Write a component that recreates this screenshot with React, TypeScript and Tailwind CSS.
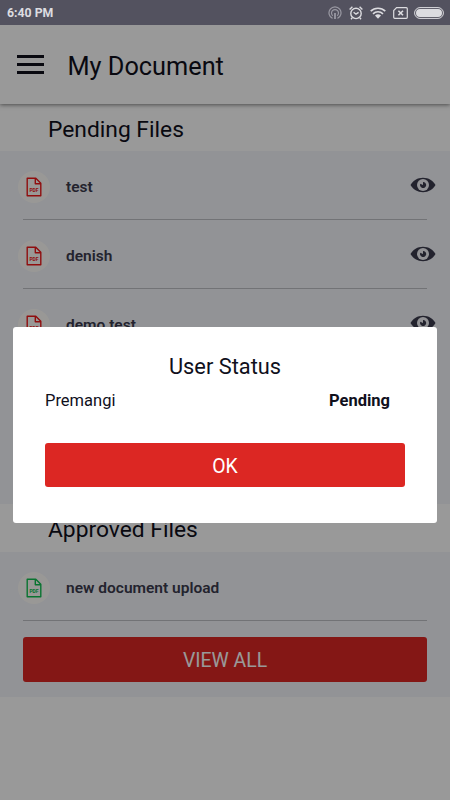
import React, { ReactNode } from 'react';

interface FileItem {
  name: string;
  approved?: boolean;
}

const pendingFiles: FileItem[] = [{ name: 'test' }, { name: 'denish' }, { name: 'demo test' }];
const approvedFiles: FileItem[] = [{ name: 'new document upload', approved: true }];

const StatusBar: React.FC = () => (
  <div className="relative z-20 flex h-[25px] shrink-0 items-center justify-between bg-[#53525f] pl-[7px] pr-[6px] text-[#dcdce0]">
    <span className="mt-px text-[12.3px] font-bold leading-none">6:40 PM</span>
    <div className="flex items-center">
      <svg className="mr-[7px]" width="14" height="14" viewBox="0 0 14 14" fill="none" stroke="#9a99a3" strokeWidth="1.2">
        <path d="M4.5 12.4a6 6 0 1 1 5 0" />
        <path d="M4.8 9.8a3.5 3.5 0 1 1 4.4 0" />
        <path d="M7 7v6" strokeWidth="1.8" />
      </svg>
      <svg className="mr-[7px]" width="14" height="14" viewBox="0 0 14 14" fill="none" stroke="currentColor" strokeWidth="1.4">
        <circle cx="7" cy="7.4" r="5.2" />
        <path d="M4.6 6.2L7 8.2l2.6-1.8M.6 3.4L3.4 .8M13.4 3.4L10.6 .8M3.2 11.8l-1.2 1.5M10.8 11.8l1.2 1.5" />
      </svg>
      <svg className="mr-[7px]" width="16" height="12" viewBox="0 0 16 12" fill="none" stroke="currentColor" strokeWidth="1.6">
        <path d="M.7 4.2a10.5 10.5 0 0 1 14.6 0M3 6.8a7.2 7.2 0 0 1 10 0" />
        <path d="M5 8.6a4.4 4.4 0 0 1 6 0L8 11.8z" fill="currentColor" stroke="none" />
      </svg>
      <svg className="mr-[6px]" width="15" height="12" viewBox="0 0 15 12" fill="none" stroke="currentColor" strokeWidth="1.2">
        <path d="M3.6.7h9.7a1 1 0 0 1 1 1v8.6a1 1 0 0 1-1 1H1.7a1 1 0 0 1-1-1V3.6z" />
        <path d="M5.4 3.7l4.6 4.6M10 3.7L5.4 8.3" strokeWidth="1.6" />
      </svg>
      <svg width="30" height="12" viewBox="0 0 30 12" fill="none">
        <rect x=".6" y=".6" width="28.8" height="10.8" rx="5.4" stroke="currentColor" />
        <rect x="2" y="2" width="26" height="8" rx="4" fill="currentColor" />
      </svg>
    </div>
  </div>
);

const PdfIcon: React.FC<{ className?: string }> = ({ className = '' }) => (
  <span className={`flex h-8 w-8 items-center justify-center rounded-full bg-[#fffefa] ${className}`}>
    <svg width="16" height="20" viewBox="0 0 16 20" fill="none" stroke="currentColor" strokeWidth="1.4" strokeLinejoin="round">
      <path d="M1.2 1.2h8.6l5 5v12.6H1.2z" />
      <path d="M9.3 1.2v5.5h5.5" />
      <text x="8" y="15" textAnchor="middle" fontSize="5" fontWeight="700" fill="currentColor" stroke="none">
        PDF
      </text>
    </svg>
  </span>
);

const EyeIcon: React.FC = () => (
  <svg width="26" height="16" viewBox="0 0 26 16">
    <path d="M.5 8C3 3.6 7.5.8 13 .8S23 3.6 25.5 8C23 12.4 18.5 15.2 13 15.2S3 12.4.5 8z" fill="#3b3b4d" />
    <circle cx="13" cy="8" r="6" fill="#f3f4f9" />
    <path d="M13 4.9v3l-2.7-1.2A3.1 3.1 0 1 0 13 4.9z" fill="#3b3b4d" />
  </svg>
);

const FileRow: React.FC<{ file: FileItem }> = ({ file }) => (
  <div className="mx-[23px] flex h-[69px] items-center border-b border-[#bfc0c5]">
    <PdfIcon className={`-ml-[5px] mt-1 ${file.approved ? 'text-[#10c050]' : 'text-[#f01818]'}`} />
    <span className="ml-4 mt-[6px] text-[15.5px] font-semibold text-[#3b3b4d]">{file.name}</span>
    {!file.approved && (
      <span className="-mr-[9px] ml-auto">
        <EyeIcon />
      </span>
    )}
  </div>
);

const SectionTitle: React.FC<{ children: ReactNode }> = ({ children }) => (
  <h2 className="pl-12 pt-[9px] text-[22.8px] leading-[34px] text-[#10101c]">{children}</h2>
);

const Button: React.FC<{ children: ReactNode; className?: string }> = ({ children, className = '' }) => (
  <button className={`flex items-center justify-center rounded-[3px] bg-[#dc2723] pt-[3px] text-[19.4px] text-white ${className}`}>
    {children}
  </button>
);

const StatusDialog: React.FC = () => (
  <div className="absolute inset-0 z-10 bg-black/40 pt-[326.5px]">
    <div className="ml-[13px] h-[196.5px] w-[423.5px] rounded-[3px] bg-white pl-8 pr-[31.5px] pt-[26px] text-[#10101c]">
      <h3 className="text-center text-[21.8px] leading-7">User Status</h3>
      <div className="mt-2 flex justify-between pr-[15px] text-[16.5px] leading-6">
        <span>Premangi</span>
        <span className="font-bold">Pending</span>
      </div>
      <Button className="mt-[30.5px] h-[44px] w-full">OK</Button>
    </div>
  </div>
);

export default function App() {
  return (
    <div className="relative flex h-[800px] w-[450px] flex-col overflow-hidden bg-white font-[Roboto,sans-serif]">
      <StatusBar />
      <header className="relative flex h-[79px] shrink-0 items-center bg-white pl-[17px] shadow-[0_1px_4px_rgba(0,0,0,0.5)]">
        <div className="flex w-[27px] flex-col gap-[5px]">
          <span className="h-[3px] bg-[#10101c]" />
          <span className="h-[3px] bg-[#10101c]" />
          <span className="h-[3px] bg-[#10101c]" />
        </div>
        <h1 className="ml-[23.5px] mt-[5px] text-[25.3px] text-[#10101c]">My Document</h1>
      </header>

      <div className="h-[47px] shrink-0">
        <SectionTitle>Pending Files</SectionTitle>
      </div>
      <section className="h-[353px] shrink-0 bg-[#f3f5fb]">
        {pendingFiles.map((file) => (
          <FileRow key={file.name} file={file} />
        ))}
      </section>

      <div className="h-12 shrink-0">
        <SectionTitle>Approved Files</SectionTitle>
      </div>
      <section className="h-[145px] shrink-0 bg-[#f3f5fb]">
        {approvedFiles.map((file) => (
          <FileRow key={file.name} file={file} />
        ))}
        <Button className="mx-[23px] mt-4 h-[45px] w-[404px]">VIEW ALL</Button>
      </section>

      <StatusDialog />
    </div>
  );
}
